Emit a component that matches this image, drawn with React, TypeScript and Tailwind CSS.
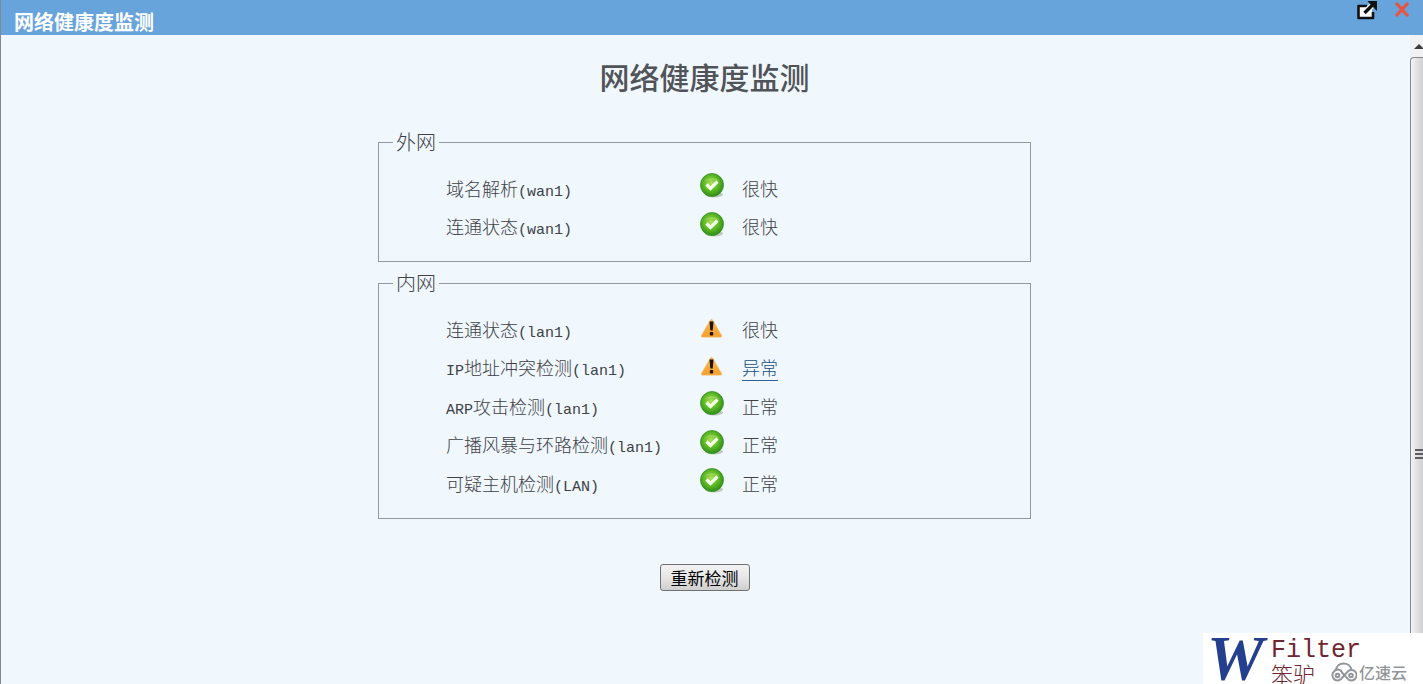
import type { ReactNode } from 'react'

type Check = {
  name: string
  iface: string
  prefix?: string
  state: 'ok' | 'warn'
  result: string
  link?: boolean
}

const wanChecks: Check[] = [
  { name: '域名解析', iface: '(wan1)', state: 'ok', result: '很快' },
  { name: '连通状态', iface: '(wan1)', state: 'ok', result: '很快' },
]

const lanChecks: Check[] = [
  { name: '连通状态', iface: '(lan1)', state: 'warn', result: '很快' },
  { prefix: 'IP', name: '地址冲突检测', iface: '(lan1)', state: 'warn', result: '异常', link: true },
  { prefix: 'ARP', name: '攻击检测', iface: '(lan1)', state: 'ok', result: '正常' },
  { name: '广播风暴与环路检测', iface: '(lan1)', state: 'ok', result: '正常' },
  { name: '可疑主机检测', iface: '(LAN)', state: 'ok', result: '正常' },
]

function OkIcon() {
  return (
    <svg width="26" height="26" viewBox="0 0 26 26" aria-hidden="true">
      <defs>
        <radialGradient id="okFill" cx="0.46" cy="0.42" r="0.6">
          <stop offset="0" stopColor="#b4e05a" />
          <stop offset="0.5" stopColor="#62bd28" />
          <stop offset="1" stopColor="#2b8a16" />
        </radialGradient>
      </defs>
      <ellipse cx="15" cy="21.5" rx="9" ry="3" fill="#9aa89a" opacity="0.6" />
      <circle cx="13" cy="12" r="11.500" fill="url(#okFill)" stroke="#3a9322" strokeWidth="0.8" />
      <path d="M4.500 9a10 8 0 0 1 17 0c-4-3-13-3-17 0z" fill="#c8ef9a" opacity="0.35" />
      <path d="M7.500 11.500l4 4L18.500 8.500" fill="none" stroke="#f4ffe9" strokeWidth="3.200" />
    </svg>
  )
}

function WarnIcon() {
  return (
    <svg width="24" height="22" viewBox="0 0 24 22" aria-hidden="true">
      <defs>
        <linearGradient id="warnFill" x1="0" y1="0" x2="0" y2="1">
          <stop offset="0" stopColor="#f9b64d" />
          <stop offset="1" stopColor="#f5a02c" />
        </linearGradient>
      </defs>
      <path d="M11.500 2q1-1.500 2 0l9 15.500q.6 1.600-1 1.600H3.500q-1.600 0-1-1.600z" fill="url(#warnFill)" stroke="#f3b765" strokeWidth="0.8" />
      <path d="M10.500 3.500h4l-.8 9h-2.400z" fill="#1d1206" />
      <rect x="10.800" y="14" width="3.400" height="3.400" rx="1" fill="#1d1206" />
    </svg>
  )
}

function Latin({ children }: { children: ReactNode }) {
  return <span className="font-['Liberation_Mono',monospace] text-[15px] leading-none">{children}</span>
}

function CheckGroup({ title, checks }: { title: string; checks: Check[] }) {
  return (
    <fieldset className="w-full max-w-[653px] border border-[#949a9e] px-[14px] pt-[12px] pb-[16px]">
      <legend className="px-[3px] text-[20px] leading-[28px]">{title}</legend>
      <table className="ml-[53px] text-[18px] leading-[26px]">
        <tbody>
          {checks.map((check) => (
            <tr key={check.name} className="odd:h-[39px] even:h-[38px]">
              <th scope="row" className="w-[253px] p-0 text-left font-light whitespace-nowrap">
                {check.prefix && <Latin>{check.prefix}</Latin>}
                {check.name}
                <Latin>{check.iface}</Latin>
              </th>
              <td className="w-[43px] p-0">
                {check.state === 'ok' ? (
                  <div className="pb-[3px]"><OkIcon /></div>
                ) : (
                  <WarnIcon />
                )}
              </td>
              <td className="p-0">
                {check.link ? (
                  <a href="#conflict" className="border-b border-[#2d6495] text-[#174f85]">{check.result}</a>
                ) : (
                  check.result
                )}
              </td>
            </tr>
          ))}
        </tbody>
      </table>
    </fieldset>
  )
}

function ScrollBar() {
  return (
    <div className="flex w-[13px] shrink-0 flex-col overflow-hidden bg-[#f0f1f3]">
      <div className="flex h-[22px] shrink-0 items-center justify-end">
        <svg width="9" height="5" viewBox="0 0 9 5" aria-hidden="true">
          <path d="M0 5l5-5 4 4v1z" fill="#3c3c3c" />
        </svg>
      </div>
      <div className="flex h-[792px] shrink-0 items-center justify-end rounded-tl-sm border-t border-l border-[#85888c] bg-linear-to-r from-[#f4f4f4] to-[#cfd0d2]">
        <div className="flex w-[8px] flex-col gap-[2px]">
          <div className="h-[2px] bg-[#5c5e62]" />
          <div className="h-[2px] bg-[#5c5e62]" />
          <div className="h-[2px] bg-[#5c5e62]" />
        </div>
      </div>
    </div>
  )
}

function Brand() {
  return (
    <div className="absolute right-0 bottom-0 flex h-[51px] w-[220px] bg-white pl-[4px]">
      <span className="w-[64px] shrink-0 font-['Liberation_Serif',serif] text-[64px] leading-[51px] font-bold text-[#243f8e] italic">W</span>
      <div className="flex flex-col pt-[5px] text-[#6f2630]">
        <span className="font-['Liberation_Mono',monospace] text-[25px] leading-[26px]">Filter</span>
        <span className="text-[22px] leading-[18px] font-light">笨驴</span>
      </div>
      <div className="absolute right-[16px] bottom-0 flex h-[24px] items-center gap-[2px] bg-white text-[#929599]">
        <svg width="26" height="20" viewBox="0 0 26 20" fill="none" stroke="currentColor" strokeWidth="2" aria-hidden="true">
          <path d="M5 9C5 4 8.500 1.500 12.500 1.500S20 4 20.500 8" />
          <path d="M20.500 8a5.200 5.200 0 1 1-4.500 8L11 10.500a4.500 4.500 0 0 0-8-1A5 5 0 1 0 10 17l6-6.500a5 5 0 0 1 4.500-2.500" />
          <circle cx="6.500" cy="13.500" r="1.800" />
          <circle cx="20" cy="13.500" r="1.800" />
        </svg>
        <span className="text-[16px] leading-[20px] font-medium">亿速云</span>
      </div>
    </div>
  )
}

export default function App() {
  return (
    <div className="relative flex h-screen flex-col overflow-hidden border-l border-[#7d8a96] bg-[#f0f7fd] font-['Noto_Sans_CJK_SC',sans-serif] font-light text-[#3e4246]">
      <header className="flex h-[35px] shrink-0 items-center justify-between bg-[#68a4dc] pr-[13px] pl-[13px] text-white">
        <span className="pt-[8px] text-[20px] leading-[28px] font-bold">网络健康度监测</span>
        <div className="flex items-center gap-[15px] pb-[16px]">
          <button type="button" aria-label="新窗口打开">
            <svg width="24" height="20" viewBox="0 0 24 20" aria-hidden="true">
              <path d="M4 6.500h8l5 4v7H4z" fill="#fff" />
              <path d="M12 6H3.500v12H18v-6" fill="none" stroke="#111" strokeWidth="2.600" strokeLinejoin="round" />
              <path d="M9 13.500L17 5.500" stroke="#fff" strokeWidth="6" />
              <path d="M9.500 13L18 4.500" stroke="#111" strokeWidth="3.400" />
              <path d="M12.500 1H22v10l-3-3-4-4z" fill="#111" />
            </svg>
          </button>
          <button type="button" aria-label="关闭">
            <svg width="16" height="16" viewBox="0 0 16 16" aria-hidden="true">
              <path d="M2 1l12 13M14 1L2 14" stroke="#e9533f" strokeWidth="3.200" />
            </svg>
          </button>
        </div>
      </header>

      <div className="flex min-h-0 flex-1">
        <main className="flex min-w-0 flex-1 flex-col items-center pt-[21px] pr-[2px]">
          <h1 className="mb-[32px] text-[30px] leading-[40px] font-medium text-[#505458]">网络健康度监测</h1>
          <div className="flex w-full flex-col items-center gap-[7px]">
            <CheckGroup title="外网" checks={wanChecks} />
            <CheckGroup title="内网" checks={lanChecks} />
          </div>
          <button
            type="button"
            className="mt-[45px] h-[27px] w-[90px] rounded-[3px] border border-[#707070] bg-linear-to-b from-[#f3f3f3] via-[#e6e6e6] to-[#cfcfcf] text-[17px] leading-[24px] font-normal text-black"
          >
            重新检测
          </button>
        </main>
        <ScrollBar />
      </div>

      <Brand />
    </div>
  )
}
